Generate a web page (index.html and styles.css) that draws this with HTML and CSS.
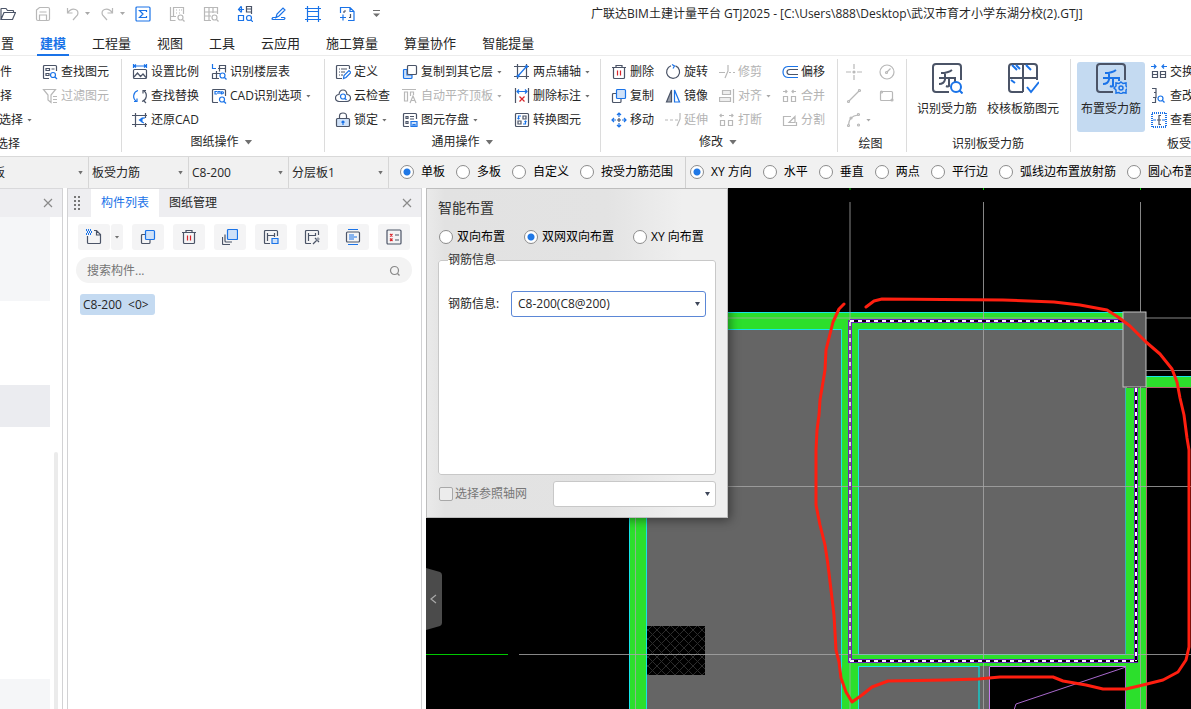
FILE: index.html
```html
<!DOCTYPE html>
<html lang="zh-CN">
<head>
<meta charset="utf-8">
<title>广联达BIM土建计量平台 GTJ2025</title>
<link rel="stylesheet" href="styles.css">
</head>
<body>
<svg class="defs" aria-hidden="true">
  <symbol id="folder" viewBox="0 0 16 16"><path d="M1 13.500V3q0-.5.5-.5H6l1.500 2H13q.5 0 .5.500v2M1 13.500h11.500L15.500 6.500H4z"/></symbol>
  <symbol id="save" viewBox="0 0 16 16"><path d="M1.500 4l3-2.500H13q1.500 0 1.500 1.500v10q0 1.500-1.500 1.500H3q-1.500 0-1.500-1.500zM4.500 14.500V9h7v5.500M4.500 6h7"/></symbol>
  <symbol id="undo" viewBox="0 0 16 16"><path d="M2.500 2v5h5M2.500 7Q6 2 10.500 3.500 14 5 12.500 9L8 14"/></symbol>
  <symbol id="redo" viewBox="0 0 16 16"><path d="M12.500 2v5h-5M12.500 7Q9 2 4.500 3.500 1 5 2.500 9L7 14"/></symbol>
  <symbol id="sigma" viewBox="0 0 16 16"><rect class="b" x="1" y="1" width="14" height="14" rx="1"/><path class="b" d="M11.500 6V4.500h-7L8 8l-3.500 3.500h7V10"/></symbol>
  <symbol id="rowsearch" viewBox="0 0 16 16"><path d="M1.500 1v13.500h5M4.500 10V1.500h10V8M1.500 10.500H7M7 4h1m2 0h1m1 0h1M7 7h1m2 0h1"/><circle cx="11.500" cy="11.500" r="2.500"/><path d="M13.500 13.500l2 2"/></symbol>
  <symbol id="gridsearch" viewBox="0 0 16 16"><path d="M8 14.500H1.500v-13h13V8M1.500 6h13M1.500 10H8M6 1.500v13M10 1.500V7"/><circle cx="11.500" cy="11.500" r="2.500"/><path d="M13.500 13.500l2 2"/></symbol>
  <symbol id="blocks" viewBox="0 0 16 16"><path class="b" d="M4.500 0L1.500 3.500l3 3M1.500 3.500h5.500M4.500 1v5M1.500 9.500v5h5v-5zM1 9.500h6"/><path d="M9.500 6V.5h5V6zM9.500 3h5M14.500 6v2"/><circle class="b" cx="12" cy="12" r="2.500"/><path class="b" d="M14 14l2 2"/></symbol>
  <symbol id="pen" viewBox="0 0 16 16"><path class="b" d="M5 11.500l1-3.500 6-6 2 2-6 6zM5 11.500H2Q0 13.500 2 13.500h11q2-1.500 0-2h-3"/></symbol>
  <symbol id="frame" viewBox="0 0 16 16"><path class="b" d="M2.500 0v16M13.500 0v16M0 2.500h16M2 5.500h12M2 10.500h12M0 13.500h16"/></symbol>
  <symbol id="addpage" viewBox="0 0 16 16"><path class="b" d="M1.500 7V1.500H11l4 4V14.500H9M1 11.500h6M4 8.500v6M11 1.500v4h4"/><path d="M5 5h2M5 5v2M11.500 8v3.500H10"/></symbol>

  <symbol id="find" viewBox="0 0 16 16"><path d="M7 14.500H2.500q-1 0-1-1v-11q0-1 1-1h11q1 0 1 1V7M4 4.500h3.500v2H4zM4 9.500h3v2H4zM9.500 5h3"/><circle class="b" cx="11" cy="11" r="2.500"/><path class="b" d="M13 13l2 2"/></symbol>
  <symbol id="filter" viewBox="0 0 16 16"><path d="M1.500 1.500h12L9 7v7.500L6 12V7zM11 8.500h4M11 11.500h4M11 14.500h4"/></symbol>
  <symbol id="scale" viewBox="0 0 16 16"><path class="b" d="M1 2h14M1.500 0v4M14.500 0v4M4 .5L2 2l2 1.500M12 .5L14 2l-2 1.500"/><rect x="1.500" y="5.500" width="13" height="9" rx="1"/><path d="M2 13l3.500-4 3 3.500L11 10l3 3.500"/></symbol>
  <symbol id="floor" viewBox="0 0 16 16"><path class="b" d="M1.500 0v4.500H5"/><path d="M7 4.500h7.500v4M14.500 4.500v-3h-6v6M1.500 9.500v5H8M1.500 9.500H9M5.500 7v7.500"/><circle class="b" cx="11.500" cy="11.500" r="2.500"/><path class="b" d="M13.500 13.500l2 2"/></symbol>
  <symbol id="replace" viewBox="0 0 16 16"><path class="b" d="M6 2.500A6 6 0 0 0 4 13M2 13.500h3v-3"/><path d="M10 13.500A6 6 0 0 0 12 3M14 2.500h-3v3M12 13l2 2"/></symbol>
  <symbol id="cad" viewBox="0 0 16 16"><path d="M7 14.500H2.500q-1 0-1-1v-11q0-1 1-1h11q1 0 1 1V8"/><path class="b" d="M6 3.500H4v2.500h2M7 6V3.500h2V6M10.500 3.500V6q2 0 2-1.200t-2-1.300"/><circle class="b" cx="11" cy="11.500" r="2.500"/><path class="b" d="M13 13.500l2 2"/></symbol>
  <symbol id="restore" viewBox="0 0 16 16"><path d="M3.500 1v14M0 3.500h15M13.500 1v5M0 12.500h15M13.500 11v4"/><path class="b" d="M9 8.500q1-3 4-2.500M9 8.500q1 2 3 2.500"/><path class="bf" d="M10.500 5v6L6.500 8z"/></symbol>
  <symbol id="define" viewBox="0 0 16 16"><path d="M7 14.500H2.500q-1 0-1-1v-11q0-1 1-1h11q1 0 1 1V5M4 5h1m1 0h6M4 8h1m1 0h4M4 11h1m1 0h2"/><path class="b" d="M8.500 14.500l.5-3 5-5 2 2-5 5z"/></symbol>
  <symbol id="cloud" viewBox="0 0 16 16"><path d="M4 13.500Q.5 13 .5 10T4 6.500Q4.500 2 8 2t4 4.500q3.500.5 3.500 3.500T12 13.500z"/><circle class="b" cx="8" cy="8.500" r="2.500"/><path class="b" d="M10 10.500l1.500 1.500"/></symbol>
  <symbol id="lock" viewBox="0 0 16 16"><path d="M4.500 6V4q0-3 3.500-3t3.500 3v2"/><rect class="lf" x="1.500" y="6.500" width="13" height="8" rx="1"/><path class="b" d="M8 9v4M6.500 10.500L8 9l1.500 1.500"/></symbol>
  <symbol id="copyto" viewBox="0 0 16 16"><path class="b lf2" d="M5 5.500H2.500q-1 0-1 1v7q0 1 1 1H9q1 0 1-1V11H5z"/><rect class="w" x="5.500" y="1.500" width="9" height="9" rx="1"/></symbol>
  <symbol id="aligntop" viewBox="0 0 16 16"><path d="M0 1.500h14M2.500 4h3v9h-3zM8.500 8V4h3v3M8 15l3-7 3 7M9 12.500h4"/></symbol>
  <symbol id="store" viewBox="0 0 16 16"><path d="M7 14.500H2.500q-1 0-1-1v-11q0-1 1-1h11q1 0 1 1V7M4 4.500h2v2H4zM4 9.500h2v2H4zM8 4.500h4M8 7h4"/><path class="b lf2" d="M9 9.500h6v5H9zM11 14.500v-2h2v2"/></symbol>
  <symbol id="axis" viewBox="0 0 16 16"><path d="M3.500 0v15M12.500 0v15M0 2.500h15M0 12.500h15"/><path class="b" d="M4 12L12 3"/><circle class="bf" cx="4" cy="12" r="1.500"/><circle class="bf" cx="12.500" cy="2.500" r="1.500"/></symbol>
  <symbol id="deldim" viewBox="0 0 16 16"><path d="M1.500 0v15M14.500 0v15"/><path class="b" d="M3 3.500h10M5 1.500l-2 2 2 2M11 1.500l2 2-2 2"/><path class="r" d="M5.500 8.500l5 5M10.500 8.500l-5 5"/></symbol>
  <symbol id="convert" viewBox="0 0 16 16"><rect x="1.500" y="1.500" width="13" height="13" rx="1"/><path d="M9 4h3v3H9zM4 9h3v3H4z"/><path class="b" d="M7 4H4.500v3M3.500 6l1 1 1-1M9 12h2.500V9M10.500 10l1-1 1 1"/></symbol>
  <symbol id="trash" viewBox="0 0 16 16"><path d="M1 3.500h14M5 3.500v-2h6v2M2.500 4v9.500q0 1 1 1h9q1 0 1-1V4"/><path class="r" d="M6.500 6.500v5M9.500 6.500v5"/></symbol>
  <symbol id="rotate" viewBox="0 0 16 16"><path d="M6 1.800A6.500 6.500 0 1 0 10.500 1.900"/><path class="b" d="M7 .5l2.500 1.500L8 4.500"/></symbol>
  <symbol id="trim" viewBox="0 0 16 16"><path d="M0 8.500h6M10 8.500h2m2 0h2M9 1v6l-3 7"/></symbol>
  <symbol id="offset" viewBox="0 0 16 16"><path class="b" d="M16 2.500H6Q1 3 1 8t5 5.500h10"/><path d="M16 5.500H8q-3 0-3 2.500t3 2.500h8"/></symbol>
  <symbol id="copy" viewBox="0 0 16 16"><path d="M5 5.500H2.500q-1 0-1 1v7q0 1 1 1H9q1 0 1-1V11"/><rect class="lf" x="5.500" y="1.500" width="9" height="9" rx="1"/></symbol>
  <symbol id="mirror" viewBox="0 0 16 16"><path class="df" d="M6.500 2v12h-5z"/><path d="M6.500 2v12h-5z"/><path class="b" d="M9.500 2v12h5z"/></symbol>
  <symbol id="align" viewBox="0 0 16 16"><path class="gf" d="M3.500 2.500h8v4h-8zM.5 9.500h11v4H.5z"/><path d="M14.500 1v14"/></symbol>
  <symbol id="merge" viewBox="0 0 16 16"><path d="M1.500 8.500h4v5h-4zM9.500 8.500h4v5h-4zM1 3.500h4M3.500 2L5 3.500 3.500 5M14 3.500h-4M11.500 2L10 3.500 11.500 5"/></symbol>
  <symbol id="move" viewBox="0 0 16 16"><path class="b" d="M8 1v4M8 11v4M1 8h4M11 8h4M6 3l2-2 2 2M6 13l2 2 2-2M3 6L1 8l2 2M13 6l2 2-2 2"/><path d="M8 6v4M6 8h4"/></symbol>
  <symbol id="extend" viewBox="0 0 16 16"><path d="M0 8h3m2 0h3m2 0h3M15 1v6l-3 7"/></symbol>
  <symbol id="break" viewBox="0 0 16 16"><path d="M1.500 8.500h4v5h-4zM9.500 8.500h4v5h-4zM1 3.500h4M2.500 2L1 3.500 2.500 5M14 3.500h-4M12.500 2L14 3.500 12.500 5"/></symbol>
  <symbol id="split" viewBox="0 0 16 16"><path d="M9 4.500H1.500v9h13V10M7 10.500l6-6v6z"/></symbol>
  <symbol id="point" viewBox="0 0 16 16"><path d="M8 0v5M8 11v5M0 8h5M11 8h5"/><circle class="gd" cx="8" cy="8" r="1"/></symbol>
  <symbol id="circle" viewBox="0 0 16 16"><circle cx="8" cy="8" r="7"/><path d="M8 8l3.500-3.500"/><circle cx="7.500" cy="8.500" r="1"/></symbol>
  <symbol id="line" viewBox="0 0 16 16"><path d="M3 13L13 3"/><circle cx="2.500" cy="13.500" r="1"/><circle cx="13.500" cy="2.500" r="1"/></symbol>
  <symbol id="rect" viewBox="0 0 16 16"><rect x="1.500" y="3.500" width="12" height="9" rx="1"/><circle cx="2.500" cy="4" r="1"/><circle cx="13" cy="12" r="1"/></symbol>
  <symbol id="arc" viewBox="0 0 16 16"><path d="M2.500 13Q3 4 12 3"/><circle cx="2.500" cy="13.500" r="1"/><circle cx="5" cy="6" r="1"/><circle cx="12.500" cy="2.500" r="1"/><circle cx="12.500" cy="13" r="1"/></symbol>
  <symbol id="swap" viewBox="0 0 16 16"><path class="b" d="M0 2.500h5M3 .5l2 2-2 2M16 2.500h-5M13 .5l-2 2 2 2"/><path d="M1.500 7.500h5v6h-5zM9.500 7.500h5v6h-5zM1 10.500h6M9 10.500h6"/></symbol>
  <symbol id="edit" viewBox="0 0 16 16"><path d="M1 .5h4v4H3M5 4.500v5H2M4.500 9.500v5H1"/><circle class="b" cx="9.500" cy="10.500" r="2.500"/><path class="b" d="M11.500 12.500l2 2"/></symbol>
  <symbol id="view" viewBox="0 0 16 16"><rect class="b dot" x="1" y="1" width="14" height="14"/><path class="b" d="M2 8h3m6 0h3"/><path d="M10 3.500H8v9h2M6 8h4"/></symbol>
  <symbol id="bars" viewBox="0 0 32 32"><path d="M18 30H5q-3 0-3-3V5q0-3 3-3h22q3 0 3 3v13M10 11q7 0 11-3M8 16h16v4M8 22q5 0 6-4.500V11M18 16v8q-1 1-3 0"/><circle class="b" cx="25" cy="25" r="5"/><path class="b" d="M28.500 28.500l3 3"/></symbol>
  <symbol id="check" viewBox="0 0 32 32"><path d="M16 30H5q-3 0-3-3V5q0-3 3-3h22q3 0 3 3v13M16 2v28M2 16h28"/><path class="b" d="M5 3l5 5M9 3l4 4M19 3l5 5M4 18l4 3M20 25l4 5 8-10"/></symbol>
  <symbol id="layout" viewBox="0 0 32 32"><path d="M18 30H5q-3 0-3-3V5q0-3 3-3h22q3 0 3 3v13"/><path class="b" d="M10 11q7 0 11-3M8 16h16v3M8 22q5 0 6-4.500V11M18 16v8q-1 1-3 0"/><path class="gear" d="M26 20l2 1.500 3-.5v3l2 2-2 2v3l-3-.5-2 1.500-2-1.500-3 .5v-3l-2-2 2-2v-3l3 .5z"/><circle class="gear" cx="26" cy="26" r="2"/></symbol>

  <symbol id="new" viewBox="0 0 16 16"><path d="M1.500 7v6.500q0 1 1 1h11q1 0 1-1V5.500l-4-4H8M10.500 2v4h4"/><path class="b dot" d="M0 1h5M1 3h5M0 5h5"/></symbol>
  <symbol id="copies" viewBox="0 0 16 16"><path d="M3 5.500v6.500q0 1 1 1h6M.5 8v6.500q0 1 1 1H8"/><rect class="lf" x="5.500" y=".5" width="10" height="10" rx="1"/></symbol>
  <symbol id="hsave" viewBox="0 0 16 16"><path d="M7 14.500H2.500q-1 0-1-1v-11q0-1 1-1h11q1 0 1 1V7M4.500 4v8M11.500 4v4M4.500 6.500h7"/><path class="b lf2" d="M9 9.500h6v5H9z"/></symbol>
  <symbol id="hpick" viewBox="0 0 16 16"><path d="M7 14.500H2.500q-1 0-1-1v-11q0-1 1-1h11q1 0 1 1V6M4.500 4v8M11.500 4v3M4.500 6.500h7M9 15l4-4M11 9l4 4"/><path class="df" d="M14 8l2 2-2 2-2-2z"/></symbol>
  <symbol id="sort" viewBox="0 0 16 16"><path class="b" d="M3 .5h10M3 15.500h10M4 6h5M4 8h8M4 10h5"/><rect x="1.500" y="3" width="13" height="10" rx="1"/></symbol>
  <symbol id="list" viewBox="0 0 16 16"><rect x="1" y="1" width="14" height="14" rx="1"/><path class="r" d="M4 5l2.500 2.500M6.500 5L4 7.500M4 9.500L6.500 12M6.500 9.500L4 12"/><path d="M9 6h4M9 11h4"/></symbol>
  <symbol id="close" viewBox="0 0 10 10"><path d="M1 1l8 8M9 1L1 9"/></symbol>
  <symbol id="search" viewBox="0 0 12 12"><circle cx="5.500" cy="5.500" r="4"/><path d="M8.500 8.500l2 2"/></symbol>
</svg>

<header class="titlebar">
  <nav class="quick" aria-label="快速访问">
    <button class="ico" aria-label="打开"><svg><use href="#folder"/></svg></button>
    <button class="ico off wide" aria-label="保存"><svg><use href="#save"/></svg></button>
    <button class="ico off" aria-label="撤销"><svg><use href="#undo"/></svg><i class="caret"></i></button>
    <button class="ico off" aria-label="重做"><svg><use href="#redo"/></svg><i class="caret"></i></button>
    <button class="ico" aria-label="汇总"><svg><use href="#sigma"/></svg></button>
    <button class="ico off" aria-label="查看工程量"><svg><use href="#rowsearch"/></svg></button>
    <button class="ico off" aria-label="查看报表"><svg><use href="#gridsearch"/></svg></button>
    <button class="ico" aria-label="识别"><svg><use href="#blocks"/></svg></button>
    <button class="ico" aria-label="绘制"><svg><use href="#pen"/></svg></button>
    <button class="ico" aria-label="轴网"><svg><use href="#frame"/></svg></button>
    <button class="ico" aria-label="添加图纸"><svg><use href="#addpage"/></svg></button>
    <button class="ico more" aria-label="更多"><i class="caret"></i></button>
  </nav>
  <h1>广联达BIM土建计量平台 GTJ2025 - [C:\Users\888\Desktop\武汉市育才小学东湖分校(2).GTJ]</h1>
</header>

<nav class="menu">
  <a href="#">置</a><a href="#" class="active">建模</a><a href="#">工程量</a><a href="#">视图</a><a href="#">工具</a><a href="#">云应用</a><a href="#">施工算量</a><a href="#">算量协作</a><a href="#">智能提量</a>
</nav>

<section class="ribbon">
  <div class="group g-select">
    <div class="cols">
      <div class="col first"><button class="cmd">件</button><button class="cmd">择</button><button class="cmd clip">选择<i class="caret"></i></button></div>
      <div class="col"><button class="cmd"><svg><use href="#find"/></svg>查找图元</button><button class="cmd off"><svg><use href="#filter"/></svg>过滤图元</button></div>
    </div>
    <div class="name low start">选择</div>
  </div>
  <div class="group g-sheet">
    <div class="cols wide">
      <div class="col"><button class="cmd"><svg><use href="#scale"/></svg>设置比例</button><button class="cmd"><svg><use href="#replace"/></svg>查找替换</button><button class="cmd"><svg><use href="#restore"/></svg>还原CAD</button></div>
      <div class="col"><button class="cmd"><svg><use href="#floor"/></svg>识别楼层表</button><button class="cmd"><svg><use href="#cad"/></svg>CAD识别选项<i class="caret"></i></button></div>
    </div>
    <div class="name">图纸操作<i class="caret big"></i></div>
  </div>
  <div class="group">
    <div class="cols wide">
      <div class="col"><button class="cmd"><svg><use href="#define"/></svg>定义</button><button class="cmd"><svg><use href="#cloud"/></svg>云检查</button><button class="cmd"><svg><use href="#lock"/></svg>锁定<i class="caret"></i></button></div>
      <div class="col"><button class="cmd"><svg><use href="#copyto"/></svg>复制到其它层<i class="caret"></i></button><button class="cmd off"><svg><use href="#aligntop"/></svg>自动平齐顶板<i class="caret"></i></button><button class="cmd"><svg><use href="#store"/></svg>图元存盘<i class="caret"></i></button></div>
      <div class="col"><button class="cmd"><svg><use href="#axis"/></svg>两点辅轴<i class="caret"></i></button><button class="cmd"><svg><use href="#deldim"/></svg>删除标注<i class="caret"></i></button><button class="cmd"><svg><use href="#convert"/></svg>转换图元</button></div>
    </div>
    <div class="name">通用操作<i class="caret big"></i></div>
  </div>
  <div class="group g-modify">
    <div class="cols">
      <div class="col"><button class="cmd"><svg><use href="#trash"/></svg>删除</button><button class="cmd"><svg><use href="#copy"/></svg>复制</button><button class="cmd"><svg><use href="#move"/></svg>移动</button></div>
      <div class="col"><button class="cmd"><svg><use href="#rotate"/></svg>旋转</button><button class="cmd"><svg><use href="#mirror"/></svg>镜像</button><button class="cmd off"><svg><use href="#extend"/></svg>延伸</button></div>
      <div class="col"><button class="cmd off"><svg><use href="#trim"/></svg>修剪</button><button class="cmd off"><svg><use href="#align"/></svg>对齐<i class="caret"></i></button><button class="cmd off"><svg><use href="#break"/></svg>打断</button></div>
      <div class="col"><button class="cmd"><svg><use href="#offset"/></svg>偏移</button><button class="cmd off"><svg><use href="#merge"/></svg>合并</button><button class="cmd off"><svg><use href="#split"/></svg>分割</button></div>
    </div>
    <div class="name">修改<i class="caret big"></i></div>
  </div>
  <div class="group g-draw">
    <div class="cols">
      <div class="col"><button class="cmd off" aria-label="点"><svg><use href="#point"/></svg></button><button class="cmd off" aria-label="直线"><svg><use href="#line"/></svg></button><button class="cmd off" aria-label="弧"><svg><use href="#arc"/></svg><i class="caret"></i></button></div>
      <div class="col"><button class="cmd off" aria-label="圆"><svg><use href="#circle"/></svg></button><button class="cmd off" aria-label="矩形"><svg><use href="#rect"/></svg></button></div>
    </div>
    <div class="name low">绘图</div>
  </div>
  <div class="group g-detect">
    <div class="cols bigs"><button class="bigcmd"><svg><use href="#bars"/></svg>识别受力筋</button><button class="bigcmd"><svg><use href="#check"/></svg>校核板筋图元</button></div>
    <div class="name low">识别板受力筋</div>
  </div>
  <div class="group g-last">
    <div class="cols">
      <button class="bigcmd on"><svg><use href="#layout"/></svg>布置受力筋</button>
      <div class="col"><button class="cmd"><svg><use href="#swap"/></svg>交换</button><button class="cmd"><svg><use href="#edit"/></svg>查改</button><button class="cmd"><svg><use href="#view"/></svg>查看</button></div>
    </div>
    <div class="name low">板受</div>
  </div>
</section>

<form class="options">
  <div class="combo cut"><select aria-label="构件类型"><option>板</option></select><i class="caret"></i></div>
  <div class="combo"><select aria-label="构件"><option>板受力筋</option></select><i class="caret"></i></div>
  <div class="combo"><select aria-label="规格"><option>C8-200</option></select><i class="caret"></i></div>
  <div class="combo"><select aria-label="分层"><option>分层板1</option></select><i class="caret"></i></div>
  <div class="radios">
    <label><input type="radio" name="range" checked>单板</label>
    <label><input type="radio" name="range">多板</label>
    <label><input type="radio" name="range">自定义</label>
    <label><input type="radio" name="range">按受力筋范围</label>
  </div>
  <div class="radios second">
    <label><input type="radio" name="dir" checked>XY 方向</label>
    <label><input type="radio" name="dir">水平</label>
    <label><input type="radio" name="dir">垂直</label>
    <label><input type="radio" name="dir">两点</label>
    <label><input type="radio" name="dir">平行边</label>
    <label><input type="radio" name="dir">弧线边布置放射筋</label>
    <label><input type="radio" name="dir">圆心布置</label>
  </div>
</form>

<main class="work">
  <aside class="nav">
    <div class="bar"><button class="x" aria-label="关闭"><svg><use href="#close"/></svg></button></div>
    <div class="tree">
      <div class="blocks"><div class="blk top"></div><div class="blk sel"></div><div class="blk end"></div></div>
      <div class="track"><div class="thumb"></div></div>
    </div>
  </aside>
  <aside class="parts">
    <div class="bar">
      <span class="grip"></span>
      <button class="tab active">构件列表</button><button class="tab">图纸管理</button>
      <button class="x" aria-label="关闭"><svg><use href="#close"/></svg></button>
    </div>
    <div class="tools">
      <div class="split"><button class="tool" aria-label="新建"><svg><use href="#new"/></svg></button><button class="tool slim" aria-label="新建选项"><i class="caret"></i></button></div>
      <button class="tool" aria-label="复制"><svg><use href="#copy"/></svg></button>
      <button class="tool" aria-label="删除"><svg><use href="#trash"/></svg></button>
      <button class="tool" aria-label="层间复制"><svg><use href="#copies"/></svg></button>
      <button class="tool" aria-label="存档"><svg><use href="#hsave"/></svg></button>
      <button class="tool" aria-label="提取"><svg><use href="#hpick"/></svg></button>
      <button class="tool" aria-label="排序"><svg><use href="#sort"/></svg></button>
      <button class="tool" aria-label="列表"><svg><use href="#list"/></svg></button>
    </div>
    <div class="search"><input type="text" aria-label="搜索构件" placeholder="搜索构件..."><svg><use href="#search"/></svg></div>
    <div class="items"><button class="item">C8-200&nbsp; &lt;0&gt;</button></div>
  </aside>

  <section class="view">
    <svg class="plan" aria-label="平面图">
      <defs>
        <pattern id="hatch" width="9" height="9" patternUnits="userSpaceOnUse"><path d="M0 0l9 9M9 0L0 9" stroke="#2c2c2c" stroke-width="1" fill="none"/></pattern>
      </defs>
      <g transform="translate(-426 -188)">
        <g fill="#656565">
          <rect x="647" y="329" width="195" height="400"/>
          <rect x="858" y="329" width="269" height="327"/>
          <rect x="858" y="666" width="131" height="60"/>
        </g>
        <rect x="647" y="626" width="58" height="49"/>
        <rect x="647" y="626" width="58" height="49" fill="url(#hatch)"/>
        <g fill="#2cdf2c">
          <rect x="629" y="312" width="494" height="18"/>
          <rect x="629" y="329" width="18" height="400"/>
          <rect x="841" y="320" width="18" height="400"/>
          <rect x="1126" y="388" width="20" height="340"/>
          <rect x="858" y="655" width="270" height="11"/>
          <rect x="1146" y="376" width="60" height="12"/>
        </g>
        <rect x="978" y="666" width="2" height="60" fill="#28b0b0"/>
        <g fill="none" stroke="#16e6e6">
          <path d="M629 312.500h494M647 329.500h194.500V720M858.500 655V329.500H1123M858.500 654.500H1126M858.500 720V666.500H979M629.500 329V720M646.500 329V720M1146 376.500h50"/>
          <path d="M1125.500 388V655" stroke="#3aaebb"/>
        </g>
        <rect x="990" y="667" width="135" height="50"/>
        <g fill="none" stroke="#c77bf0">
          <path d="M989.500 720V666.500H1126"/>
          <path d="M1125.500 667V720M1126 667L1016 704L1014 710" stroke="#a868cc"/>
          <path d="M1146.500 388V720M1147 387.500H1200" stroke="#b0626e"/>
        </g>
        <g fill="none" stroke="#a8a8a8" stroke-opacity=".8">
          <path d="M728 318H1200M1146 370.500H1200M728 486.500H1200M519 654.500H1200M635.500 500V720M850 202V720M983.500 202V720M1140.500 202V720"/>
        </g>
        <path d="M426 654.500H508" stroke="#00c800"/>
        <path d="M850 188v2M983.500 188v2M1140.500 188v2" stroke="#00c800"/>
        <g fill="none" stroke="#7020c0" stroke-width="4"><path d="M850 321H1123M850 320V661M848 661H1138M1136 388V661"/></g>
        <g fill="none" stroke="#000" stroke-width="2"><path d="M850 321H1123M850 661H1138M1136 388V661"/><path d="M850 320V661" stroke="#666"/></g>
        <g fill="none" stroke="#fff" stroke-width="2" stroke-dasharray="4 4"><path d="M850 321H1123M850 661H1138M1136 388V661"/><path d="M850 322V661" stroke="#ddd"/></g>
        <rect x="1123" y="312" width="23" height="75" fill="#5b5b5b" stroke="#c4c4c4"/>
        <path fill="none" stroke="#ff1f10" stroke-width="3" stroke-linejoin="round" stroke-linecap="round" d="M844 304L839 309L833 322L826 350L825 370L820 400L819 415L817 430L816 450L816 505L820 525L825 545L828 565L831 590L834 615L836 650L839 662L841 678L846 692L852 702L862 695L872 687L888 681L945 680L978 679L1000 677L1053 677L1063 681L1086 685L1103 689L1126 689L1143 685L1163 680L1178 672L1186 660L1189 647L1189 450L1187 438L1184 415L1180 398L1177 382L1172 369L1160 354L1146 342L1130 326L1118 317L1107 310L1080 305L1054 302L1003 300L882 299L874 301L866 307"/>
      </g>
    </svg>
    <button class="handle" aria-label="收起"><svg viewBox="0 0 16 62"><path class="hb" d="M0 0l14 4q2 1 2 3v48q0 2-2 3L0 62z"/><path class="hl" d="M10 27l-5 4 5 4"/></svg></button>

    <form class="dialog">
      <h2>智能布置</h2>
      <div class="modes">
        <label><input type="radio" name="mode">双向布置</label>
        <label><input type="radio" name="mode" checked>双网双向布置</label>
        <label><input type="radio" name="mode">XY 向布置</label>
      </div>
      <fieldset>
        <legend>钢筋信息</legend>
        <div class="field"><label for="bar">钢筋信息:</label><div class="pick focus"><select id="bar"><option>C8-200(C8@200)</option></select><i class="caret"></i></div></div>
      </fieldset>
      <div class="ref">
        <label><input type="checkbox">选择参照轴网</label>
        <div class="pick"><select aria-label="参照轴网"><option></option></select><i class="caret"></i></div>
      </div>
    </form>
  </section>
</main>
</body>
</html>
```
FILE: styles.css
```css
* { box-sizing: border-box; }
html, body { height: 100%; }
body {
  margin: 0;
  display: flex;
  flex-direction: column;
  overflow: hidden;
  background: #fff;
  color: #262626;
  font: 12px/16px "Open Sans", "Noto Sans CJK SC", sans-serif;
}
button, select, input { font: inherit; color: inherit; }
button { border: 0; padding: 0; background: none; white-space: nowrap; }
.defs { position: absolute; width: 0; height: 0; }
svg { fill: none; stroke: #4b5467; stroke-width: 1.2; flex: none; }
svg .b { stroke: #1a73e8; }
svg .r { stroke: #d9252a; }
svg .bf { fill: #1a73e8; stroke: none; }
svg .df { fill: #9aa0ac; stroke: none; }
svg .gf { fill: #eee; }
svg .gd { fill: #b8b8b8; }
svg .lf { fill: #cfe1f8; stroke: #1a73e8; }
#lock .lf { stroke: #4b5467; }
svg .lf2 { fill: #cfe1f8; }
svg .w { fill: #fff; }
svg .dot { stroke-dasharray: 1 1; stroke-width: 2; }
svg .gear { fill: #c4daf3; stroke: #1a73e8; stroke-width: 1.5; }
.off { color: #b3b3b3; }
.off svg { stroke: #b8b8b8; }

.caret {
  flex: none;
  width: 6px;
  height: 4px;
  background: #707070;
  clip-path: polygon(0 0, 100% 0, 50% 100%);
}
.caret.big { width: 8px; height: 5px; }
.off .caret { background: #a8a8a8; }

.titlebar { display: flex; align-items: center; height: 27px; flex: none; }
.quick { display: flex; align-items: center; gap: 18px; flex: none; }
.ico { display: flex; align-items: center; gap: 4px; height: 16px; }
.ico svg { width: 16px; height: 16px; }
.ico.off .caret { margin-right: -8px; }
.ico.wide { margin: 0 -4px 0 1px; }
.more .caret { width: 7px; height: 7px; clip-path: polygon(0 0, 100% 0, 100% 15%, 0 15%, 0 50%, 100% 50%, 50% 100%, 0 50%); }
.titlebar h1 { margin: 0 0 0 211px; font-size: 12px; font-weight: 400; white-space: nowrap; }

.menu {
  display: flex;
  flex: none;
  gap: 26px;
  height: 29px;
  padding-left: 1px;
  border-bottom: 1px solid #ececec;
  font-size: 13px;
  line-height: 32px;
}
.menu a { position: relative; color: #262626; text-decoration: none; white-space: nowrap; }
.menu .active { color: #1a73e8; font-weight: 700; }
.menu .active::after { content: ""; position: absolute; inset: auto -3px -1px; height: 2px; background: #1a73e8; }

.ribbon { display: flex; flex: none; height: 101px; padding: 3px 0 4px; border-bottom: 1px solid #d9d9d9; overflow: hidden; }
.group { display: flex; flex-direction: column; flex: none; padding: 1px 10px 0; border-right: 1px solid #dcdcdc; }
.cols { display: flex; gap: 11px; height: 72px; }
.cols.wide { gap: 12px; }
.col { display: flex; flex-direction: column; }
.cmd { display: flex; align-items: center; gap: 3px; height: 24px; }
.cmd svg { width: 16px; height: 16px; }
.cmd .caret { margin-left: 1px; }
.off .caret, .cmd .caret { width: 5px; height: 3px; }
.name { display: flex; align-items: center; justify-content: center; gap: 6px; height: 23px; white-space: nowrap; }
.name.low { padding-top: 4px; }
.name.start { justify-content: flex-start; margin-left: -4px; }
.g-select { padding-left: 0; width: 122px; }
.g-select .first { width: 31px; }
.clip { margin-left: -1px; }
.g-sheet { padding-right: 13px; }
.g-modify { padding-right: 12px; }
.g-draw { padding: 1px 11px 0 8px; }
.g-draw .cols { gap: 8px; }
.g-detect { padding-right: 11px; }
.cols.bigs { gap: 10px; }
.bigcmd { display: flex; flex-direction: column; align-items: center; gap: 6px; height: 70px; margin-top: 2px; line-height: 18px; border-radius: 3px; }
.bigcmd svg { width: 32px; height: 32px; stroke-width: 2; overflow: visible; }
.bigcmd.on { width: 68px; background: #c4daf1; }
.g-last { padding: 1px 0 0 6px; border: 0; }
.g-last .cols { gap: 6px; }
.g-last .name { justify-content: flex-start; padding-left: 90px; }

.options { display: flex; flex: none; height: 31px; background: #f1f1f1; }
.combo { display: flex; align-items: center; flex: none; width: 100px; padding: 0 5px 0 3px; border-right: 1px solid #d6d6d6; }
.combo.cut { width: 89px; padding-left: 0; }
.combo.cut select { margin-left: -7px; }
.combo .caret, .pick .caret { width: 5px; height: 4px; }
select { flex: 1; min-width: 0; height: 24px; padding: 0; border: 0; outline: 0; background: none; appearance: none; }
.radios { display: flex; align-items: center; gap: 11px; padding: 0 12px 2px 11px; flex: none; color: #000; }
.radios.second { padding-left: 4px; border-left: 1px solid #d0d0d0; }
label { display: flex; align-items: center; gap: 7px; white-space: nowrap; flex: none; }
input[type="radio"] {
  flex: none;
  width: 14px;
  height: 14px;
  margin: 0;
  appearance: none;
  border: 1px solid #8c8c8c;
  border-radius: 50%;
  background: #fff;
}
input[type="radio"]:checked { background: radial-gradient(circle, #1f78e6 0 3px, #fff 4px); }

.work { display: flex; flex: 1; min-height: 0; gap: 4px; }
.nav, .parts { display: flex; flex-direction: column; flex: none; border-right: 1px solid #d2d2d4; border-top: 1px solid #d9d9db; }
.nav { width: 63px; }
.parts { width: 355px; border-left: 1px solid #d2d2d4; }
.bar { display: flex; align-items: center; height: 28px; flex: none; background: #eeeef1; }
.x { display: flex; margin-left: auto; }
.x svg { width: 10px; height: 10px; stroke: #8a8a8a; }
.nav .x { margin-right: 9px; }
.parts .x { margin-right: 9px; }
.tree { display: flex; flex: 1; min-height: 0; gap: 4px; }
.blocks { display: flex; flex-direction: column; width: 50px; }
.blk { flex: none; }
.blk.top { height: 84px; background: #f5f6f8; }
.blk.sel { height: 42px; margin: 84px 0 auto; background: #ebecf0; }
.blk.end { height: 30px; background: #f5f6f8; }
.track { display: flex; width: 4px; padding-top: 235px; }
.thumb { flex: 1; border-radius: 2px 2px 0 0; background: #ebebeb; }
.grip {
  width: 8px;
  height: 16px;
  margin: 0 10px 0 5px;
  background: radial-gradient(circle, #777 1px, transparent 1px) 0 0 / 4px 4px;
}
.tab { height: 28px; padding: 0 10px 0 10px; }
.tab.active { background: #fff; color: #1a73e8; }
.tools { display: flex; gap: 9px; padding: 7px 10px; }
.split { display: flex; gap: 1px; }
.tool { display: flex; align-items: center; justify-content: center; width: 32px; height: 26px; border-radius: 3px; background: #f4f4f5; }
.tool svg { width: 16px; height: 16px; }
.tool.slim { width: 12px; }
.tool .caret { width: 5px; height: 3px; }
.search { display: flex; align-items: center; height: 26px; margin: 0 9px 0 8px; padding: 1px 11px 0; border-radius: 13px; background: #f3f3f3; }
.search input { flex: 1; border: 0; padding: 0; outline: 0; background: none; }
.search input::placeholder { color: #757575; }
.search svg { width: 12px; height: 12px; stroke: #888; }
.items { padding: 11px 12px; }
.item { height: 21px; padding: 0 6px 0 3px; border-radius: 3px; background: #c4daf1; }

.view { position: relative; flex: 1; min-width: 0; overflow: hidden; background: #000; }
.plan { display: block; width: 100%; height: 100%; fill: #000; stroke: none; stroke-width: 1; }
.handle { position: absolute; left: 0; top: 380px; }
.handle svg { display: block; width: 16px; height: 62px; }
.hb { fill: #4b4b4b; stroke: none; }
.hl { stroke: #aaa; }
.dialog {
  position: absolute;
  left: 0;
  top: 0;
  width: 302px;
  padding: 11px 11px 10px;
  border: 1px solid #bdbdbd;
  background: linear-gradient(90deg, #eaeaea, #e2e2e2 6%, #e3e3e3 60%, #efefef 85%);
  box-shadow: 2px 2px 10px rgba(0, 0, 0, .45);
}
.dialog h2 { margin: 0; font-size: 14px; line-height: 16px; font-weight: 400; color: #333; }
.modes { display: flex; gap: 19px; padding: 13px 1px 0; color: #000; }
.dialog label { gap: 4px; }
.dialog fieldset { height: 223px; min-width: 0; margin: 7px 0 6px; padding: 23px 9px 0; border: 1px solid #c8c8c8; border-radius: 3px; background: #fff; }
.dialog legend { padding: 0; height: 16px; color: #333; }
.field { display: flex; align-items: center; justify-content: space-between; }
.pick { display: flex; align-items: center; width: 163px; height: 26px; padding: 0 5px 0 6px; border: 1px solid #c8c8c8; border-radius: 3px; background: #fff; }
.pick .caret { background: #3d4659; }
.pick.focus { width: 195px; border-color: #5b87d6; }
.ref { display: flex; align-items: center; justify-content: space-between; color: #777; }
.ref label { padding-left: 1px; gap: 2px; }
input[type="checkbox"] { width: 14px; height: 14px; margin: 0; appearance: none; border: 1px solid #a8a8a8; border-radius: 2px; background: #ececec; }
```
